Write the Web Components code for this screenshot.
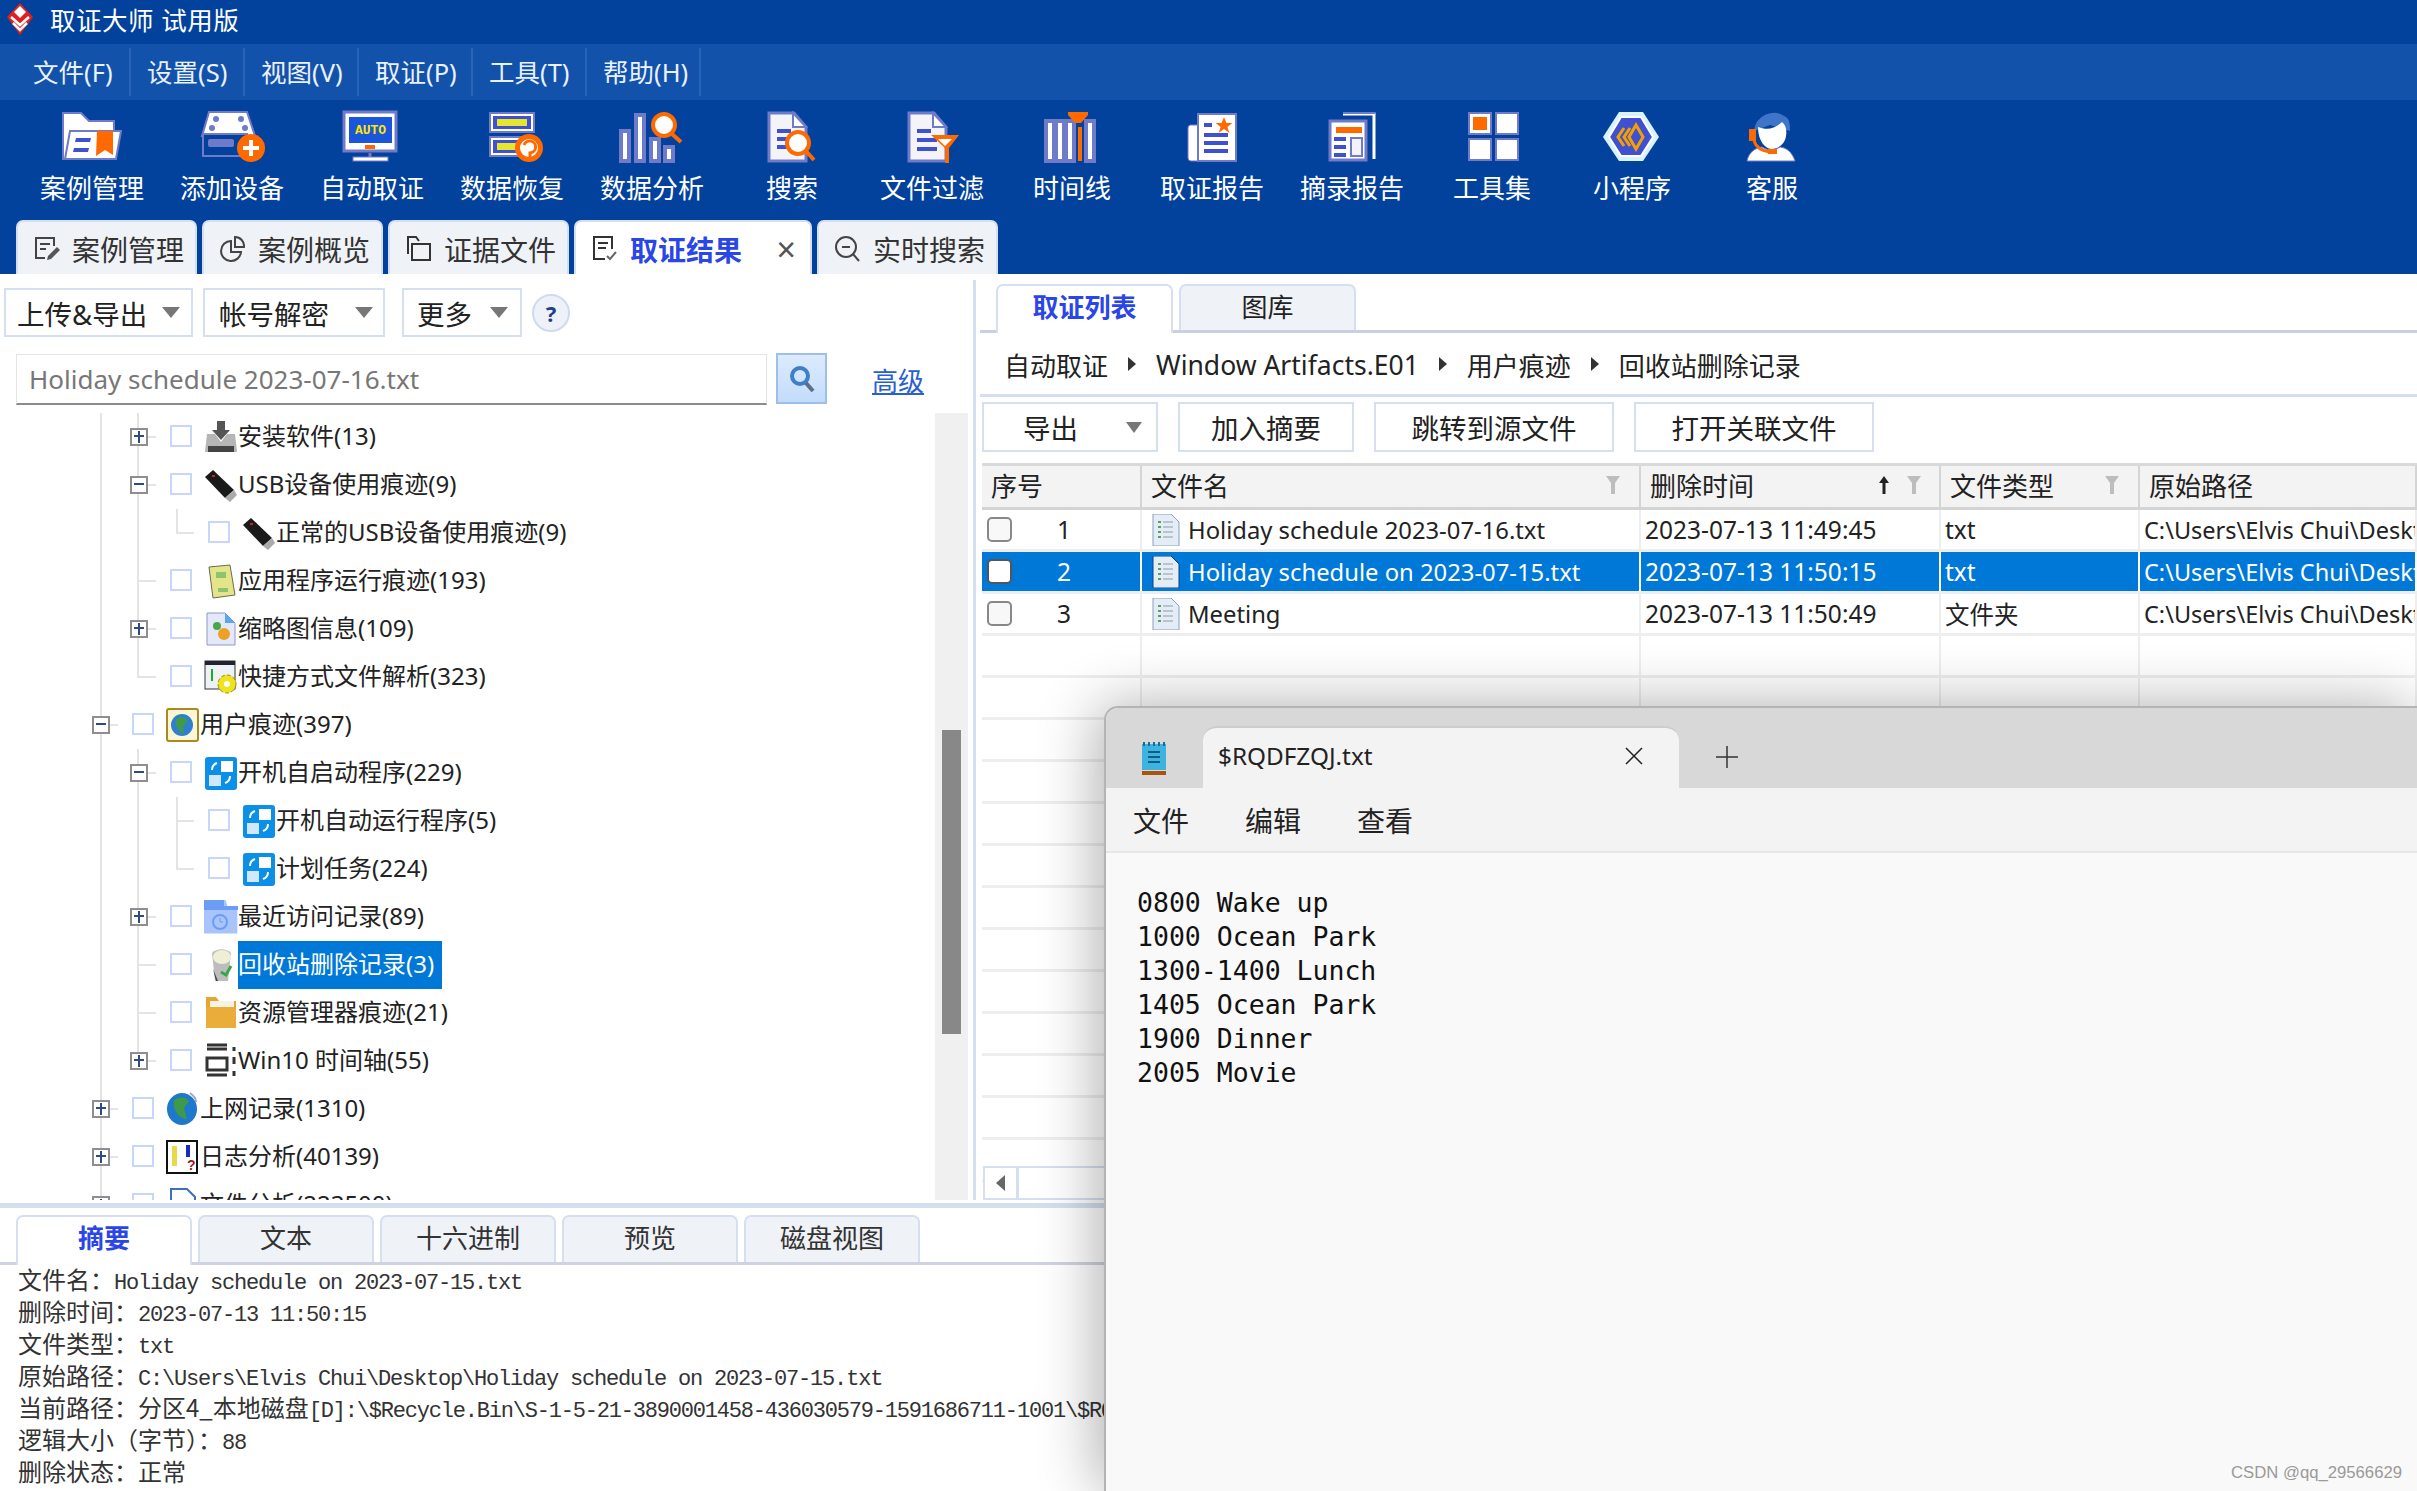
<!DOCTYPE html>
<html lang="zh">
<head>
<meta charset="utf-8">
<title>取证大师 试用版</title>
<style>
  html, body {
    margin: 0;
    height: 100%;
    overflow: hidden;
    background: #fff;
    font-family: "Noto Sans", "Noto Sans CJK SC", sans-serif;
  }
</style>
</head>
<body>
<forensic-app>
  <app-titlebar>取证大师 试用版</app-titlebar>
  <app-menubar>
    <menu-item>文件(F)</menu-item>
    <menu-item>设置(S)</menu-item>
    <menu-item>视图(V)</menu-item>
    <menu-item>取证(P)</menu-item>
    <menu-item>工具(T)</menu-item>
    <menu-item>帮助(H)</menu-item>
  </app-menubar>
  <app-toolbar>
    <tool-button icon="case">案例管理</tool-button>
    <tool-button icon="device">添加设备</tool-button>
    <tool-button icon="auto">自动取证</tool-button>
    <tool-button icon="recover">数据恢复</tool-button>
    <tool-button icon="analyze">数据分析</tool-button>
    <tool-button icon="search">搜索</tool-button>
    <tool-button icon="filter">文件过滤</tool-button>
    <tool-button icon="timeline">时间线</tool-button>
    <tool-button icon="report">取证报告</tool-button>
    <tool-button icon="digest">摘录报告</tool-button>
    <tool-button icon="tools">工具集</tool-button>
    <tool-button icon="mini">小程序</tool-button>
    <tool-button icon="service">客服</tool-button>
  </app-toolbar>
  <main-tabs>
    <main-tab width="181" icon="edit">案例管理</main-tab>
    <main-tab width="181" icon="pie">案例概览</main-tab>
    <main-tab width="181" icon="files">证据文件</main-tab>
    <main-tab width="238" icon="check" active closable>取证结果</main-tab>
    <main-tab width="181" icon="find">实时搜索</main-tab>
  </main-tabs>
  <work-area>
    <left-panel slot="left">
      <drop-button width="189" ml="0" pl="11" pr="11" slot="tools">上传&amp;导出</drop-button>
      <drop-button width="182" ml="10" pl="14" pr="10" slot="tools">帐号解密</drop-button>
      <drop-button width="120" ml="17" pl="13" pr="12" slot="tools">更多</drop-button>
      <tree-row level="2" exp="plus" icon="install" v="100,137" conn>安装软件(13)</tree-row>
      <tree-row level="2" exp="minus" icon="usb" v="100,137" conn>USB设备使用痕迹(9)</tree-row>
      <tree-row level="3" icon="usb" v="100,137" half="176" conn>正常的USB设备使用痕迹(9)</tree-row>
      <tree-row level="2" icon="app" v="100,137" conn>应用程序运行痕迹(193)</tree-row>
      <tree-row level="2" exp="plus" icon="thumb" v="100,137" conn>缩略图信息(109)</tree-row>
      <tree-row level="2" icon="shortcut" v="100" half="137" conn>快捷方式文件解析(323)</tree-row>
      <tree-row level="1" exp="minus" icon="user" v="100" conn>用户痕迹(397)</tree-row>
      <tree-row level="2" exp="minus" icon="startup" v="100,137" conn>开机自启动程序(229)</tree-row>
      <tree-row level="3" icon="startup" v="100,137,176" conn>开机自动运行程序(5)</tree-row>
      <tree-row level="3" icon="startup" v="100,137" half="176" conn>计划任务(224)</tree-row>
      <tree-row level="2" exp="plus" icon="recent" v="100,137" conn>最近访问记录(89)</tree-row>
      <tree-row level="2" icon="recycle" v="100,137" conn selected>回收站删除记录(3)</tree-row>
      <tree-row level="2" icon="folder" v="100,137" conn>资源管理器痕迹(21)</tree-row>
      <tree-row level="2" exp="plus" icon="timebar" v="100" half="137" conn>Win10 时间轴(55)</tree-row>
      <tree-row level="1" exp="plus" icon="globe" v="100" conn>上网记录(1310)</tree-row>
      <tree-row level="1" exp="plus" icon="log" v="100" conn>日志分析(40139)</tree-row>
      <tree-row level="1" exp="plus" icon="file" v="100" conn>文件分析(223500)</tree-row>
    </left-panel>
    <right-panel slot="right">
      <result-table></result-table>
    </right-panel>
    <detail-panel slot="bottom">
      <detail-line label="文件名：" >Holiday schedule on 2023-07-15.txt</detail-line>
      <detail-line label="删除时间：">2023-07-13 11:50:15</detail-line>
      <detail-line label="文件类型：">txt</detail-line>
      <detail-line label="原始路径：">C:\Users\Elvis Chui\Desktop\Holiday schedule on 2023-07-15.txt</detail-line>
      <detail-line label="当前路径：" cjk="分区4_本地磁盘">[D]:\$Recycle.Bin\S-1-5-21-3890001458-436030579-1591686711-1001\$RQDFZQJ.txt</detail-line>
      <detail-line label="逻辑大小（字节）：">88</detail-line>
      <detail-line label="删除状态：" cjk="正常"></detail-line>
    </detail-panel>
  </work-area>
  <notepad-window title="$RQDFZQJ.txt">0800 Wake up
1000 Ocean Park
1300-1400 Lunch
1405 Ocean Park
1900 Dinner
2005 Movie</notepad-window>
  <water-mark>CSDN @qq_29566629</water-mark>
</forensic-app>

<script>
const LINE = '#6f7bc9';
const BLUE = '#3f51d0';
const ORANGE = '#ff6a00';

// nudges so each glyph sits where the reference has it
const TOOL_DX = { recover: 7, analyze: -3, search: 3, filter: 3, report: 6, digest: 6, tools: 5, mini: 3, service: 4 };

// toolbar icons, drawn in a 60x52 box
const TOOL_ICONS = {
  case: `<path d="M1 2h18l8 8h25v38H1z" fill="#fff" stroke="${LINE}" stroke-width="2"/>
    <path d="M8 20h51l-5 28H3z" fill="#fff" stroke="${LINE}" stroke-width="2"/>
    <path d="M14 27h15l-1 4H13zM12 37h15l-1 4H11z" fill="${BLUE}"/>
    <path d="M35 20h16v24l-8-5-9 6z" fill="${ORANGE}"/>`,
  device: `<path d="M7 1h38l8 24H0z" fill="#fff" stroke="${LINE}" stroke-width="2"/>
    <circle cx="14" cy="8" r="3" fill="${LINE}"/><circle cx="39" cy="8" r="3" fill="${LINE}"/>
    <circle cx="10" cy="17" r="3" fill="${LINE}"/><circle cx="43" cy="17" r="3" fill="${LINE}"/>
    <rect x="1" y="23" width="44" height="22" fill="#02429c" stroke="${LINE}" stroke-width="2"/>
    <rect x="6" y="28" width="26" height="8" rx="2" fill="${LINE}"/>
    <circle cx="49" cy="37" r="14" fill="${ORANGE}"/>
    <path d="M49 29v16M41 37h16" stroke="#fff" stroke-width="4"/>`,
  auto: `<rect x="2" y="1" width="52" height="39" fill="#fff" stroke="${LINE}" stroke-width="3"/>
    <rect x="7" y="6" width="43" height="26" fill="#1a56db"/>
    <text x="28.5" y="23" text-anchor="middle" font-size="13" font-weight="700" font-family="'Liberation Mono',monospace" fill="#ffe600">AUTO</text>
    <rect x="23" y="34" width="10" height="4" fill="${ORANGE}"/>
    <path d="M28 42v5" stroke="${LINE}" stroke-width="3"/>
    <rect x="11" y="46" width="35" height="4" fill="#fff" stroke="${LINE}"/>`,
  recover: `<rect x="1" y="2" width="44" height="19" fill="#fff" stroke="${LINE}" stroke-width="2"/>
    <rect x="4" y="5" width="38" height="13" fill="${BLUE}"/><rect x="8" y="8" width="30" height="7" fill="#e6e62a"/>
    <rect x="1" y="26" width="44" height="19" fill="#fff" stroke="${LINE}" stroke-width="2"/>
    <rect x="4" y="29" width="32" height="13" fill="${BLUE}"/><rect x="8" y="32" width="22" height="7" fill="#e6e62a"/>
    <circle cx="40" cy="37" r="14" fill="${ORANGE}"/><circle cx="40" cy="37" r="9" fill="#fff"/>
    <path d="M35 34a6 6 0 1 1 6 8v6" fill="none" stroke="${ORANGE}" stroke-width="3"/>`,
  analyze: `<g fill="#fff" stroke="${LINE}" stroke-width="4"><rect x="2" y="20" width="8" height="30"/><rect x="17" y="4" width="8" height="46"/><rect x="32" y="28" width="8" height="22"/><rect x="46" y="36" width="8" height="14"/></g>
    <circle cx="45" cy="14" r="11" fill="#fff" stroke="${ORANGE}" stroke-width="4"/>
    <path d="M53 23l9 8" stroke="${ORANGE}" stroke-width="4"/>`,
  search: `<path d="M4 2h25l12 14v34H4z" fill="#f4f4f8" stroke="${LINE}" stroke-width="3"/><path d="M28 2v14h13z" fill="#fff" stroke="${LINE}" stroke-width="2"/>
    <path d="M12 20h14M12 28h10M12 36h10" stroke="${BLUE}" stroke-width="4"/>
    <circle cx="33" cy="32" r="11" fill="#fff" stroke="${ORANGE}" stroke-width="4"/>
    <path d="M41 40l8 9" stroke="${ORANGE}" stroke-width="4"/>`,
  filter: `<path d="M4 2h25l12 14v34H4z" fill="#f4f4f8" stroke="${LINE}" stroke-width="3"/><path d="M28 2v14h13z" fill="#fff" stroke="${LINE}" stroke-width="2"/>
    <path d="M12 20h14M12 29h20M12 38h20" stroke="${BLUE}" stroke-width="4"/>
    <path d="M26 24h28L44 37v15h-4V37z" fill="${ORANGE}"/><path d="M33 28h14l-7 7z" fill="#fff"/>`,
  timeline: `<g fill="#fff" stroke="${LINE}" stroke-width="4"><path d="M4 10h8v40H4zM14 10h8v40H14zM24 10h8v40H24zM44 10h8v40H44z"/></g>
    <path d="M36 16v34h4V16z" fill="${ORANGE}"/><path d="M26 1h20v3l-7 8h-6l-7-8z" fill="${ORANGE}"/>`,
  report: `<path d="M10 14H2a3 3 0 0 0-2 3v30a3 3 0 0 0 3 3h8z" fill="#fff" stroke="${LINE}"/>
    <rect x="10" y="3" width="38" height="47" fill="#fff" stroke="${LINE}" stroke-width="2"/>
    <rect x="16" y="12" width="8" height="4" fill="${BLUE}"/>
    <path d="M16 24h24M16 32h24M16 40h24" stroke="${BLUE}" stroke-width="4"/>
    <path d="M36 6l2.400 6h6l-5 4 2 6-5.400-4-5.400 4 2-6-5-4h6z" fill="${ORANGE}"/>`,
  digest: `<path d="M15 3h31v45" fill="none" stroke="#fff" stroke-width="3"/><path d="M15 2h32" stroke="${LINE}" stroke-width="2"/>
    <rect x="2" y="10" width="36" height="39" fill="#fff" stroke="${LINE}" stroke-width="3"/>
    <rect x="8" y="16" width="26" height="6" fill="${ORANGE}"/>
    <path d="M6 28h12M6 36h12M6 44h12" stroke="${BLUE}" stroke-width="4"/>
    <rect x="23" y="27" width="11" height="18" fill="#f4f4f8" stroke="${LINE}" stroke-width="2"/>`,
  tools: `<rect x="2" y="2" width="22" height="21" fill="#fff" stroke="${LINE}" stroke-width="2"/><rect x="6" y="6" width="14" height="13" fill="${ORANGE}"/>
    <rect x="29" y="2" width="22" height="21" fill="#fff" stroke="${LINE}" stroke-width="2"/>
    <rect x="2" y="28" width="22" height="21" fill="#fff" stroke="${LINE}" stroke-width="2"/>
    <rect x="29" y="28" width="22" height="21" fill="#fff" stroke="${LINE}" stroke-width="2"/>`,
  mini: `<path d="M14 1h24l16 25-16 24H14L-2 26z" fill="#d8f2ff"/><path d="M16 6h20l12 20-12 19H16L4 26z" fill="${BLUE}" stroke="#fff" stroke-width="2"/>
    <path d="M19 17l-6 9 6 9M25 17l-6 9 6 9" fill="none" stroke="#f5a000" stroke-width="3"/><path d="M31 14l7 12-7 12-7-12z" fill="none" stroke="#f5a000" stroke-width="3"/>`,
  service: `<path d="M8 20a20 20 0 0 1 32-14c4 3 4 8 4 14L24 14z" fill="#3f75c8"/>
    <path d="M12 16c8 3 16 3 24-5 4 3 5 9 4 14-1 8-8 13-14 13s-14-7-14-22z" fill="#fff"/>
    <path d="M1 50c2-9 8-13 15-14 6 4 12 4 18 0 7 1 12 5 15 14z" fill="#fff" stroke="${LINE}"/>
    <rect x="3" y="18" width="7" height="12" fill="${ORANGE}"/>
    <path d="M8 30c2 6 8 10 16 11" fill="none" stroke="${ORANGE}" stroke-width="3"/><rect x="22" y="38" width="9" height="5" fill="${ORANGE}"/>`
};

// tab icons, 26x26 stroke glyphs
const TAB_ICONS = {
  edit: `<path d="M20 10V2H2v20h9M6 8h10M6 13h6" fill="none" stroke="#444" stroke-width="2"/><path d="M13 24l1-4 9-9 3 3-9 9z" fill="#555"/>`,
  pie: `<path d="M11 5a10 10 0 1 0 10 11H11z" fill="none" stroke="#444" stroke-width="2"/><path d="M15 1a9 9 0 0 1 9 10h-9z" fill="none" stroke="#444" stroke-width="2"/>`,
  files: `<path d="M2 6V1h8l3 4M6 8h18v16H6zM2 6v12" fill="none" stroke="#333" stroke-width="2"/>`,
  check: `<path d="M20 13V1H2v22h11M6 7h10M6 12h8" fill="none" stroke="#333" stroke-width="2"/><path d="M15 20l3 3 6-7" fill="none" stroke="#666" stroke-width="2"/>`,
  find: `<circle cx="11" cy="11" r="10" fill="none" stroke="#444" stroke-width="2"/><path d="M7 11h8M18 18l6 7" stroke="#444" stroke-width="2"/>`
};

// tree icons, 34x34
const TREE_ICONS = {
  install: `<path d="M13 1h8v9h5l-9 10-9-10h5z" fill="#555"/><path d="M3 14h8l6 8 6-8h8l2 18H1z" fill="#b5b5b5"/><rect x="4" y="26" width="26" height="6" fill="#444"/>`,
  usb: `<path d="M9 2L1 9l20 21 9-8z" fill="#1a1a1a"/><path d="M21 30l5 4 7-7-3-5z" fill="#aaa"/><rect x="8" y="7" width="3" height="2" fill="#c22"/>`,
  app: `<path d="M5 3l21-2 5 30-22 3z" fill="#e4e58a" stroke="#6b6b52"/><path d="M12 8h10v6H12z" fill="#8bc46a"/><path d="M14 24h10v4H14z" fill="#8bc46a"/>`,
  thumb: `<path d="M3 1h18l10 10v22H3z" fill="#e3e8fb" stroke="#8e9ac0"/><path d="M21 1v10h10z" fill="#5aa6f2"/><circle cx="13" cy="14" r="4" fill="#4aa64a"/><circle cx="20" cy="22" r="6" fill="#eea020"/>`,
  shortcut: `<rect x="1" y="1" width="30" height="28" fill="#eef1f6" stroke="#333"/><rect x="1" y="1" width="30" height="4" fill="#223"/><path d="M8 9v12" stroke="#2a2" stroke-width="2"/><circle cx="23" cy="24" r="9" fill="#f2e21c" stroke="#9a8f10" stroke-dasharray="4 2"/><circle cx="23" cy="24" r="3" fill="#fff"/>`,
  user: `<rect x="1" y="1" width="31" height="32" rx="2" fill="#fdf6d4" stroke="#a98a20" stroke-width="2"/><circle cx="16" cy="17" r="11" fill="#2f7fd0"/><path d="M10 11c5-3 9-2 12 2l-5 6 1 7c-6-3-9-8-8-15z" fill="#3f9a4a"/>`,
  startup: `<rect x="1" y="1" width="32" height="33" rx="3" fill="#0c8fe8"/><rect x="17" y="5" width="12" height="11" fill="#fff"/><rect x="5" y="19" width="12" height="11" fill="#cfe8fb"/><path d="M8 14c0-4 2-6 5-7M26 20c0 4-2 6-5 7" stroke="#fff" stroke-width="2" fill="none"/>`,
  recent: `<path d="M0 0h22l2 8h10v34H0z" transform="scale(.98 .8)" fill="#a8c4fb"/><path d="M0 0h20v6H34v4H0z" fill="#6d9cf5"/><circle cx="16" cy="22" r="7" fill="none" stroke="#6d9cf5" stroke-width="2"/><path d="M16 18v4h3" stroke="#6d9cf5" fill="none"/>`,
  recycle: `<path d="M8 5c5-5 14-5 19 0l-3 28H11z" fill="#bdbdbd"/><ellipse cx="18" cy="9" rx="9" ry="7" fill="#efefd8"/><path d="M14 33l-5-12 3 12z" fill="#444"/><path d="M17 24l5 3 5-9" fill="none" stroke="#3aa64a" stroke-width="3"/>`,
  folder: `<path d="M2 1h10l3 4h17v27H2z" fill="#e6a52c"/><rect x="6" y="5" width="24" height="8" fill="#f7f3e4"/><path d="M2 11h30v21H2z" fill="#eaad39"/>`,
  timebar: `<path d="M3 1h20M3 5h20M3 14h20v12H3zM3 31h20M30 3v4M30 13v7M30 27v5" fill="none" stroke="#333" stroke-width="3"/>`,
  globe: `<ellipse cx="16" cy="17" rx="15" ry="16" fill="#1e78cc"/><path d="M8 8c6-4 12-3 15 1l-5 7 3 11c-7 0-15-8-13-19z" fill="#3d9a4a"/><path d="M24 1c3 2 6 5 6 9" stroke="#9ac" fill="none" stroke-width="2"/>`,
  log: `<rect x="1" y="1" width="30" height="32" fill="#fff" stroke="#111" stroke-width="2"/><rect x="6" y="6" width="5" height="20" fill="#e8d84a"/><rect x="20" y="5" width="4" height="12" fill="#1c28c4"/><text x="21" y="30" font-size="14" font-weight="700" font-family="'Liberation Sans',sans-serif" fill="#9a1c1c">?</text>`,
  file: `<path d="M5 1h16l8 8v24H5z" fill="#fff" stroke="#3a6fc4" stroke-width="2"/><rect x="10" y="14" width="5" height="18" fill="#e8c84a"/>`
};

class ForensicApp extends HTMLElement {
  constructor() {
    super();
    this.attachShadow({ mode: 'open' }).innerHTML = `
      <style>
        :host { display: flex; flex-direction: column; position: relative; width: 2417px; height: 1491px; overflow: hidden; background: #fff; }
      </style>
      <slot></slot>`;
  }
}

class AppTitlebar extends HTMLElement {
  constructor() {
    super();
    this.attachShadow({ mode: 'open' }).innerHTML = `
      <style>
        :host { display: flex; align-items: center; flex: 0 0 44px; height: 44px; background: #02429c; color: #fff; font-size: 25.500px; padding-left: 7px; }
        svg { width: 26px; height: 32px; margin: -6px 17px 0 0; }
        span { line-height: 40px; height: 44px; letter-spacing: .5px; }
      </style>
      <svg viewBox="0 0 26 32">
        <path d="M13 0L26 14 13 32 0 14z" fill="#e0201e"/>
        <path d="M13 3l6 6-6 6-6-6z" fill="#fff"/>
        <path d="M4 14l9 8 9-8M6 20l7 7 7-7" fill="none" stroke="#fff" stroke-width="2.500"/>
      </svg>
      <span><slot></slot></span>`;
  }
}

class AppMenubar extends HTMLElement {
  constructor() {
    super();
    this.attachShadow({ mode: 'open' }).innerHTML = `
      <style>
        :host { display: flex; flex: 0 0 56px; height: 56px; background: #1252ab; padding-left: 17px; align-items: center; box-sizing: border-box; }
      </style>
      <slot></slot>`;
  }
}

class MenuItem extends HTMLElement {
  constructor() {
    super();
    this.attachShadow({ mode: 'open' }).innerHTML = `
      <style>
        :host { display: block; height: 48px; line-height: 48px; width: 114px; padding-left: 16px; box-sizing: border-box; color: #eaf1ff; font-size: 25.500px; border-right: 2px solid #2a64b6; white-space: nowrap; }
      </style>
      <slot></slot>`;
  }
}

class AppToolbar extends HTMLElement {
  constructor() {
    super();
    this.attachShadow({ mode: 'open' }).innerHTML = `
      <style>
        :host { display: flex; flex: 0 0 120px; height: 120px; background: #02429c; padding-left: 22px; box-sizing: border-box; }
      </style>
      <slot></slot>`;
  }
}

class ToolButton extends HTMLElement {
  constructor() {
    super();
    const name = this.getAttribute('icon');
    const icon = TOOL_ICONS[name] || '';
    const dx = TOOL_DX[name] || 0;
    this.attachShadow({ mode: 'open' }).innerHTML = `
      <style>
        :host { display: flex; flex-direction: column; align-items: center; width: 140px; padding-top: 11px; color: #fff; font-size: 26px; }
        svg { width: 60px; height: 52px; overflow: visible; }
        div { margin-top: 6px; line-height: 38px; white-space: nowrap; }
      </style>
      <svg viewBox="0 0 60 52"><g transform="translate(${dx} 0)">${icon}</g></svg>
      <div><slot></slot></div>`;
  }
}

class MainTabs extends HTMLElement {
  constructor() {
    super();
    this.attachShadow({ mode: 'open' }).innerHTML = `
      <style>
        :host { display: flex; gap: 5px; flex: 0 0 54px; height: 54px; background: #02429c; padding-left: 16px; box-sizing: border-box; }
      </style>
      <slot></slot>`;
  }
}

class MainTab extends HTMLElement {
  constructor() {
    super();
    const active = this.hasAttribute('active');
    const icon = TAB_ICONS[this.getAttribute('icon')] || '';
    const close = this.hasAttribute('closable') ? '<b>×</b>' : '';
    this.attachShadow({ mode: 'open' }).innerHTML = `
      <style>
        :host {
          display: flex; align-items: center; box-sizing: border-box;
          width: ${this.getAttribute('width')}px; height: 54px; padding: 2px 0 0 16px;
          background: ${active ? '#fff' : '#eff2f7'}; border: 2px solid #d5dff0; border-bottom: 0; border-radius: 7px 7px 0 0;
          color: ${active ? '#2a46e6' : '#333'}; font-size: 28px; white-space: nowrap; ${active ? 'font-weight: 700;' : ''}
        }
        svg { width: 26px; height: 26px; margin-right: 12px; flex: none; }
        span { flex: 1; }
        b { font-weight: 400; font-size: 34px; color: #555; margin-right: 14px; }
      </style>
      <svg viewBox="0 0 26 26">${icon}</svg><span><slot></slot></span>${close}`;
  }
}

class WorkArea extends HTMLElement {
  constructor() {
    super();
    this.attachShadow({ mode: 'open' }).innerHTML = `
      <style>
        :host { display: grid; grid-template-columns: 972px 1fr; grid-template-rows: 929px 283px; flex: 1; min-height: 0; }
        .left { grid-column: 1; grid-row: 1; min-width: 0; }
        .right { grid-column: 2; grid-row: 1; min-width: 0; }
        .bottom { grid-column: 1 / 3; grid-row: 2; min-width: 0; border-top: 5px solid #d5dff0; }
        ::slotted(*) { height: 100%; }
      </style>
      <div class="left"><slot name="left"></slot></div>
      <div class="right"><slot name="right"></slot></div>
      <div class="bottom"><slot name="bottom"></slot></div>`;
  }
}

class DropButton extends HTMLElement {
  constructor() {
    super();
    const attr = (name, fallback) => this.getAttribute(name) || fallback;
    this.attachShadow({ mode: 'open' }).innerHTML = `
      <style>
        :host {
          display: flex; align-items: center; justify-content: space-between; box-sizing: border-box;
          width: ${attr('width', 100)}px; height: 49px; margin-left: ${attr('ml', 0)}px;
          padding: 0 ${attr('pr', 12)}px 0 ${attr('pl', 12)}px;
          border: 2px solid #d5dff0; background: #fff; color: #222; font-size: 27.500px; white-space: nowrap;
        }
        i { width: 0; height: 0; border: 9px solid transparent; border-top: 11px solid #777; border-bottom: 0; }
      </style>
      <span><slot></slot></span><i></i>`;
  }
}

class LeftPanel extends HTMLElement {
  constructor() {
    super();
    this.attachShadow({ mode: 'open' }).innerHTML = `
      <style>
        :host { display: flex; flex-direction: column; box-sizing: border-box; font-size: 24px; color: #222; overflow: hidden; }
        .tools { display: flex; align-items: center; padding: 14px 0 0 4px; height: 49px; }
        .help { width: 38px; height: 38px; box-sizing: border-box; border-radius: 50%; border: 2px solid #cfdaf0; background: #eef2f8; color: #1d3f8f; font: 700 22px "Noto Sans", sans-serif; display: flex; align-items: center; justify-content: center; margin-left: 10px; }
        .search { display: flex; align-items: center; height: 51px; padding: 17px 0 0 16px; }
        .input { width: 751px; height: 51px; box-sizing: border-box; border: 1px solid #e4e4e4; border-bottom: 2px solid #8b8b8b; color: #777; font-size: 26px; line-height: 48px; padding-left: 12px; white-space: nowrap; }
        .go { width: 51px; height: 51px; margin: -2px 0 0 9px; box-sizing: border-box; border: 2px solid #9cc0ea; background: linear-gradient(#dcebfd, #c3dcfb); display: flex; align-items: center; justify-content: center; }
        .adv { margin-left: 45px; color: #2a5fd0; font-size: 26px; text-decoration: underline; }
        .body { position: relative; flex: none; height: 787px; margin-top: 8px; overflow: hidden; }
        .bar { position: absolute; right: 4px; top: 0; bottom: 0; width: 33px; background: #f0f0f0; }
        .thumb { position: absolute; left: 7px; top: 317px; width: 19px; height: 304px; background: #888; }
      </style>
      <div class="tools"><slot name="tools"></slot><div class="help">?</div></div>
      <div class="search">
        <div class="input">Holiday schedule 2023-07-16.txt</div>
        <div class="go"><svg width="28" height="30" viewBox="0 0 28 30"><circle cx="12" cy="12" r="8" fill="none" stroke="#3f7fc8" stroke-width="4"/><path d="M18 19l7 8" stroke="#5b6f88" stroke-width="4"/></svg></div>
        <div class="adv">高级</div>
      </div>
      <div class="body">
        <slot></slot>
        <div class="bar"><div class="thumb"></div></div>
      </div>`;
  }
}

class TreeRow extends HTMLElement {
  constructor() {
    super();
    const level = Number(this.getAttribute('level'));
    const left = 92 + 38 * (level - 1);
    const color = '#e4e4e4';
    const layers = [];
    (this.getAttribute('v') || '').split(',').filter(Boolean).forEach((x) => {
      layers.push(`linear-gradient(${color},${color}) ${x}px 0/2px 100% no-repeat`);
    });
    (this.getAttribute('half') || '').split(',').filter(Boolean).forEach((x) => {
      layers.push(`linear-gradient(${color},${color}) ${x}px 0/2px 25px no-repeat`);
    });
    // short connector from the parent's line to the checkbox
    const connX = left + 8;
    layers.push(`linear-gradient(${color},${color}) ${connX}px 23px/18px 2px no-repeat`);

    const exp = this.getAttribute('exp');
    let expander = '';
    if (exp) {
      expander = `<div class="exp"><i></i>${exp === 'plus' ? '<u></u>' : ''}</div>`;
    }
    const selected = this.hasAttribute('selected');
    this.attachShadow({ mode: 'open' }).innerHTML = `
      <style>
        :host { display: flex; align-items: center; height: 48px; box-sizing: border-box; padding-left: ${left}px; background: ${layers.join(',')}; font-size: 24px; color: #222; white-space: nowrap; }
        .slot { width: 40px; flex: none; }
        .exp { position: relative; width: 18px; height: 18px; box-sizing: border-box; border: 2px solid #8e8e8e; background: #fff; margin-top: -1px; }
        .exp i { position: absolute; left: 2px; right: 2px; top: 5px; height: 2px; background: #2d4a8a; }
        .exp u { position: absolute; top: 1px; bottom: 1px; left: 6px; width: 2px; background: #2d4a8a; }
        .box { width: 22px; height: 22px; box-sizing: border-box; border: 2px solid #c9d6fb; background: #fff; flex: none; margin: -3px 12px 0 0; }
        svg { width: 34px; height: 34px; flex: none; overflow: visible; }
        .label { height: 48px; line-height: 46px; ${selected ? 'background:#0078d7;color:#fff;padding-right:8px;' : ''} }
      </style>
      <div class="slot">${expander}</div>
      <div class="box"></div>
      <svg viewBox="0 0 34 34">${TREE_ICONS[this.getAttribute('icon')] || ''}</svg>
      <div class="label"><slot></slot></div>`;
  }
}

class RightPanel extends HTMLElement {
  constructor() {
    super();
    this.attachShadow({ mode: 'open' }).innerHTML = `
      <style>
        :host { display: flex; flex-direction: column; box-sizing: border-box; position: relative; font-size: 26px; color: #222; overflow: hidden; padding: 10px 0 0 8px; }
        :host::before { content: ""; position: absolute; left: 1px; top: 6px; bottom: 3px; width: 3px; background: #d5dff0; }
        .tabs { display: flex; gap: 6px; padding-left: 16px; height: 46px; border-bottom: 3px solid #cbd0e0; flex: none; }
        .tab { width: 177px; height: 46px; box-sizing: border-box; text-align: center; line-height: 42px; background: #eff2f7; border: 2px solid #d5dff0; border-bottom: 0; border-radius: 7px 7px 0 0; }
        .tab.on { background: #fff; color: #2a46e6; height: 49px; position: relative; z-index: 1; font-weight: 700; }
        .crumbs { display: flex; align-items: center; gap: 20px; height: 61px; box-sizing: content-box; padding-left: 24px; flex: none; border-bottom: 3px solid #d5dff0; white-space: nowrap; }
        .crumbs span { position: relative; top: 1px; }
        .crumbs i { width: 0; height: 0; border: 7px solid transparent; border-left: 8px solid #333; border-right: 0; }
        .crumbs .w { font-size: 26.500px; }
        .actions { display: flex; gap: 20px; padding: 5px 0 0 2px; height: 50px; flex: none; }
        .act { height: 50px; box-sizing: border-box; border: 2px solid #d5dff0; display: flex; align-items: center; justify-content: center; font-size: 27.500px; background: #fff; white-space: nowrap; }
        .act.drop { justify-content: flex-start; padding: 0 14px 0 39px; }
        .act i { width: 0; height: 0; border: 8px solid transparent; border-top: 11px solid #777; border-bottom: 0; margin-left: auto; }
        .table { margin: 11px 0 0 2px; flex: 1; min-height: 0; overflow: hidden; }
        .hbar { position: absolute; left: 11px; top: 892px; height: 34px; width: 130px; box-sizing: border-box; border: 2px solid #d5dff0; display: flex; background: #fff; }
        .hbar span { width: 31px; border-right: 3px solid #d5dff0; display: flex; align-items: center; justify-content: center; }
        .hbar span::before { content: ""; border: 8px solid transparent; border-right: 9px solid #666; border-left: 0; }
      </style>
      <div class="tabs"><div class="tab on">取证列表</div><div class="tab">图库</div></div>
      <div class="crumbs"><span>自动取证</span><i></i><span class="w">Window Artifacts.E01</span><i></i><span>用户痕迹</span><i></i><span>回收站删除记录</span></div>
      <div class="actions">
        <div class="act drop" style="width:176px">导出<i></i></div>
        <div class="act" style="width:176px">加入摘要</div>
        <div class="act" style="width:240px">跳转到源文件</div>
        <div class="act" style="width:240px">打开关联文件</div>
      </div>
      <div class="table"><slot></slot></div>
      <div class="hbar"><span></span></div>`;
  }
}

class ResultTable extends HTMLElement {
  constructor() {
    super();
    const funnel = '<svg class="f" width="14" height="18" viewBox="0 0 14 18"><path d="M0 0h14L9 7v11H5V7z" fill="#bdbdbd"/></svg>';
    const sort = '<svg class="s" width="10" height="18" viewBox="0 0 10 18"><path d="M5 0l5 7H6.500v11h-3V7H0z" fill="#222"/></svg>';
    const doc = (sel) => `<svg class="doc" width="28" height="32" viewBox="0 0 28 32"><path d="M1 0h18l8 8v24H1z" fill="#e4edf6" stroke="${sel ? '#0a3f86' : '#8aa0bc'}"/><path d="M6 8h3M6 13h3M6 18h3M6 23h3" stroke="#5aa060" stroke-width="2"/><path d="M11 8h10M11 13h10M11 18h10M11 23h10" stroke="#b8c4d0" stroke-width="2"/></svg>`;
    const rows = [
      ['1', 'Holiday schedule 2023-07-16.txt', '2023-07-13 11:49:45', 'txt'],
      ['2', 'Holiday schedule on 2023-07-15.txt', '2023-07-13 11:50:15', 'txt', true],
      ['3', 'Meeting', '2023-07-13 11:50:49', '文件夹']
    ];
    const path = 'C:\\Users\\Elvis Chui\\Desktop\\';
    let body = rows.map(([n, name, time, type, sel]) => `
      <div class="row ${sel ? 'sel' : ''}">
        <div class="c c0"><span class="chk"></span><span class="num">${n}</span></div>
        <div class="c c1">${doc(sel)}<span>${name}</span></div>
        <div class="c c2">${time}</div>
        <div class="c c3">${type}</div>
        <div class="c c4">${path}${name}</div>
      </div>`).join('');
    for (let i = 0; i < 13; i += 1) {
      body += '<div class="row"><div class="c"></div><div class="c"></div><div class="c"></div><div class="c"></div><div class="c"></div></div>';
    }
    this.attachShadow({ mode: 'open' }).innerHTML = `
      <style>
        :host { display: block; font-size: 24.500px; color: #222; white-space: nowrap; }
        .head, .row { display: grid; grid-template-columns: 160px 499px 300px 199px 1fr; }
        .head { height: 47px; box-sizing: border-box; background: #f3f3f3; border-top: 3px solid #d9d9d9; border-bottom: 3px solid #d4d4d4; font-size: 26px; }
        .head div { display: flex; align-items: center; padding: 0 0 3px 9px; border-right: 2px solid #d4d4d4; position: relative; }
        .head .f { margin-left: auto; margin-right: 19px; }
        .head .s { margin-left: auto; margin-right: 18px; }
        .head .s + .f { margin-left: 0; margin-right: 18px; }
        .row { height: 42px; box-sizing: border-box; border-bottom: 3px solid #eee; background: #fff; }
        .row .c { display: flex; align-items: center; overflow: hidden; border-right: 2px solid #eee; padding-left: 4px; min-width: 0; }
        .row.sel { background: #0078d7; color: #fff; border-bottom-color: #eee; }
        .row.sel .c { border-right-color: #fff; }
        .c0 { padding-left: 5px !important; }
        .c1 { font-size: 23.800px; }
        .c4 { font-size: 23.500px; }
        .chk { width: 25px; height: 25px; box-sizing: border-box; border: 2px solid #888; border-radius: 5px; background: #f8f8f8; flex: none; }
        .sel .chk { background: #fff; border-color: #555; }
        .num { margin-left: 45px; }
        .doc { flex: none; margin: 0 8px 0 6px; }
      </style>
      <div class="head">
        <div>序号</div>
        <div>文件名${funnel}</div>
        <div>删除时间${sort}${funnel}</div>
        <div>文件类型${funnel}</div>
        <div>原始路径</div>
      </div>
      ${body}`;
  }
}

class DetailPanel extends HTMLElement {
  constructor() {
    super();
    const names = ['摘要', '文本', '十六进制', '预览', '磁盘视图'];
    const tabs = names.map((n, i) => `<div class="tab ${i === 0 ? 'on' : ''}">${n}</div>`).join('');
    this.attachShadow({ mode: 'open' }).innerHTML = `
      <style>
        :host { display: block; box-sizing: border-box; overflow: hidden; color: #222; }
        .tabs { display: flex; gap: 6px; padding: 7px 0 0 16px; height: 47px; border-bottom: 3px solid #cfd3df; font-size: 26px; }
        .tab { width: 176px; height: 47px; box-sizing: border-box; text-align: center; line-height: 42px; background: #eff2f7; border: 2px solid #d5dff0; border-bottom: 0; border-radius: 7px 7px 0 0; color: #333; }
        .tab.on { background: #fff; color: #2a46e6; height: 50px; position: relative; z-index: 1; font-weight: 700; }
        .text { padding-left: 18px; margin-top: -2px; }
      </style>
      <div class="tabs">${tabs}</div>
      <div class="text"><slot></slot></div>`;
  }
}

class DetailLine extends HTMLElement {
  constructor() {
    super();
    const cjk = this.getAttribute('cjk');
    this.attachShadow({ mode: 'open' }).innerHTML = `
      <style>
        :host { display: block; height: 32px; line-height: 32px; white-space: nowrap; font-size: 22px; letter-spacing: -1.200px; font-family: "Liberation Mono", monospace; color: #333; }
        .c { font: 24px "Noto Sans CJK SC", sans-serif; line-height: 32px; letter-spacing: 0; }
      </style>
      <span class="c">${this.getAttribute('label')}${cjk || ''}</span><slot></slot>`;
  }
}

class NotepadWindow extends HTMLElement {
  constructor() {
    super();
    this.attachShadow({ mode: 'open' }).innerHTML = `
      <style>
        :host {
          position: absolute; left: 1104px; top: 706px; right: 0; bottom: 0; display: flex; flex-direction: column;
          background: #f9f9f9; border: 2px solid #b4b4b4; border-right: 0; border-bottom: 0; border-radius: 14px 0 0 0;
          box-shadow: -6px 0 60px rgba(0, 0, 0, .32);
        }
        .bar { display: flex; height: 80px; flex: none; background: #d8d8d8; border-radius: 12px 0 0 0; padding: 18px 0 0 35px; box-sizing: border-box; }
        .bar svg.pad { margin: 15px 36px 0 0; }
        .tab { display: flex; align-items: center; width: 476px; height: 62px; box-sizing: border-box; background: #f3f3f3; border-top: 2px solid #cdcdcd; border-radius: 14px 14px 0 0; padding: 0 36px 5px 15px; font: 24.300px "Noto Sans", sans-serif; color: #222; }
        .tab span { flex: 1; }
        .plus { margin: 20px 0 0 37px; }
        .menu { display: flex; gap: 56px; height: 65px; flex: none; box-sizing: border-box; background: #f3f3f3; border-bottom: 2px solid #e6e6e6; align-items: center; padding-left: 27px; font: 28px "Noto Sans CJK SC", sans-serif; color: #222; }
        pre { margin: 0; padding: 33px 0 0 31px; font: 26.500px/34px "DejaVu Sans Mono", monospace; color: #111; }
      </style>
      <div class="bar">
        <svg class="pad" width="26" height="34" viewBox="0 0 26 34"><rect x="1" y="3" width="24" height="26" fill="#3fb3e0"/><path d="M3 1v4M8 1v4M13 1v4M18 1v4M23 1v4" stroke="#1c6a96" stroke-width="2"/><path d="M7 11h12M7 16h12M7 21h12" stroke="#0f5f85" stroke-width="2"/><rect x="1" y="30" width="24" height="4" fill="#a9540c"/></svg>
        <div class="tab"><span>${this.getAttribute('title')}</span>
          <svg width="18" height="18" viewBox="0 0 18 18"><path d="M1 1l16 16M17 1L1 17" stroke="#222" stroke-width="1.500"/></svg>
        </div>
        <svg class="plus" width="22" height="22" viewBox="0 0 22 22"><path d="M11 0v22M0 11h22" stroke="#333" stroke-width="1.500"/></svg>
      </div>
      <div class="menu"><span>文件</span><span>编辑</span><span>查看</span></div>
      <pre><slot></slot></pre>`;
  }
}

class WaterMark extends HTMLElement {
  constructor() {
    super();
    this.attachShadow({ mode: 'open' }).innerHTML = `
      <style>
        :host { position: absolute; right: 15px; bottom: 8px; font: 16.700px "Liberation Sans", sans-serif; color: #9a9a9a; }
      </style>
      <slot></slot>`;
  }
}

customElements.define('forensic-app', ForensicApp);
customElements.define('app-titlebar', AppTitlebar);
customElements.define('app-menubar', AppMenubar);
customElements.define('menu-item', MenuItem);
customElements.define('app-toolbar', AppToolbar);
customElements.define('tool-button', ToolButton);
customElements.define('main-tabs', MainTabs);
customElements.define('main-tab', MainTab);
customElements.define('work-area', WorkArea);
customElements.define('drop-button', DropButton);
customElements.define('left-panel', LeftPanel);
customElements.define('tree-row', TreeRow);
customElements.define('right-panel', RightPanel);
customElements.define('result-table', ResultTable);
customElements.define('detail-panel', DetailPanel);
customElements.define('detail-line', DetailLine);
customElements.define('notepad-window', NotepadWindow);
customElements.define('water-mark', WaterMark);
</script>
</body>
</html>
